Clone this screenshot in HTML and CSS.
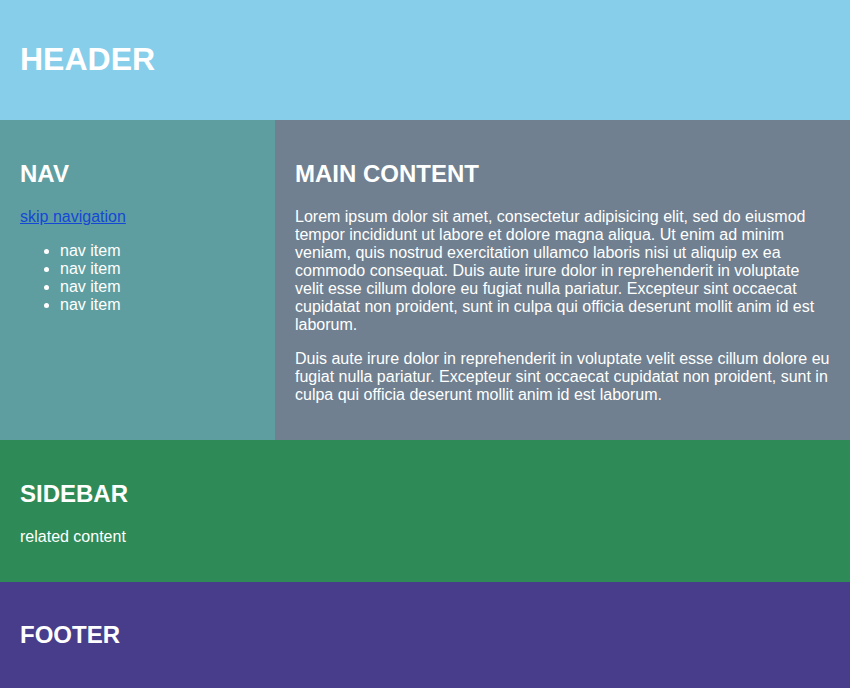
FILE: index.html
```html
<!DOCTYPE html>
<html lang="en">
<head>
<meta charset="utf-8">
<title>Layout</title>
<link rel="stylesheet" href="styles.css">
</head>
<body>
<div class="page">
  <header class="header"><h1>HEADER</h1></header>
  <nav class="nav">
    <h2>NAV</h2>
    <p><a href="#main">skip navigation</a></p>
    <ul>
      <li>nav item</li>
      <li>nav item</li>
      <li>nav item</li>
      <li>nav item</li>
    </ul>
  </nav>
  <main class="main" id="main">
    <h2>MAIN CONTENT</h2>
    <p>Lorem ipsum dolor sit amet, consectetur adipisicing elit, sed do eiusmod tempor incididunt ut labore et dolore magna aliqua. Ut enim ad minim veniam, quis nostrud exercitation ullamco laboris nisi ut aliquip ex ea commodo consequat. Duis aute irure dolor in reprehenderit in voluptate velit esse cillum dolore eu fugiat nulla pariatur. Excepteur sint occaecat cupidatat non proident, sunt in culpa qui officia deserunt mollit anim id est laborum.</p>
    <p>Duis aute irure dolor in reprehenderit in voluptate velit esse cillum dolore eu fugiat nulla pariatur. Excepteur sint occaecat cupidatat non proident, sunt in culpa qui officia deserunt mollit anim id est laborum.</p>
  </main>
  <aside class="sidebar">
    <h2>SIDEBAR</h2>
    <p>related content</p>
  </aside>
  <footer class="footer"><h2>FOOTER</h2></footer>
</div>
</body>
</html>
```
FILE: styles.css
```css
html, body {
  margin: 0;
  padding: 0;
}
body {
  font-family: "Liberation Sans", Arial, Helvetica, sans-serif;
  font-size: 16px;
  color: #fff;
}
.page {
  display: grid;
  grid-template-columns: 275px 1fr;
}
.header, .nav, .main, .sidebar, .footer {
  padding: 20px;
}
.header { grid-column: 1 / -1; background: #87ceeb; }
.nav { background: #5f9ea0; }
.main { background: #708090; }
.sidebar { grid-column: 1 / -1; background: #2e8b57; }
.footer { grid-column: 1 / -1; background: #483d8b; }
h1 {
  font-size: 32px;
  margin: 21.44px 0;
  line-height: 37px;
}
h2 {
  font-size: 24px;
  margin: 19.92px 0;
  line-height: 28px;
}
p, li {
  line-height: 18px;
}
p { margin: 16px 0; }
ul { margin: 16px 0; padding-left: 40px; }
a { color: #1447d6; }
```
